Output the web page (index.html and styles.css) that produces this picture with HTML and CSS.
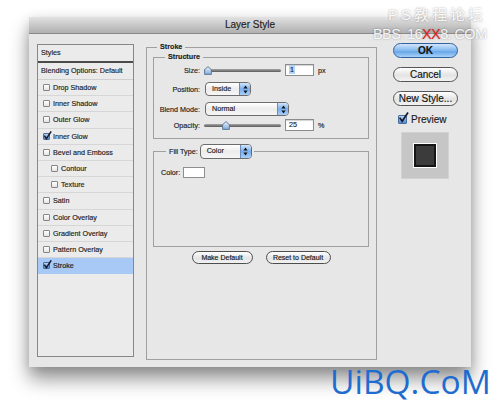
FILE: index.html
```html
<!DOCTYPE html>
<html>
<head>
<meta charset="utf-8">
<title>Layer Style</title>
<link rel="stylesheet" href="styles.css">
</head>
<body>
<div class="stage">
  <div class="dialog">
    <div class="titlebar">Layer Style</div>
    <div class="content">
      <div class="styles-list">
        <div class="list-head">Styles</div>
        <div class="list-blend">Blending Options: Default</div>
        <div class="list-row"><span class="cb"></span>Drop Shadow</div>
        <div class="list-row"><span class="cb"></span>Inner Shadow</div>
        <div class="list-row"><span class="cb"></span>Outer Glow</div>
        <div class="list-row"><span class="cb checked"><svg class="tick" viewBox="0 0 9 9" width="9" height="9"><path d="M1.3 4.6 L3.4 7.6 L8.2 0.4" fill="none" stroke="#15192a" stroke-width="1.5"/></svg></span>Inner Glow</div>
        <div class="list-row"><span class="cb"></span>Bevel and Emboss</div>
        <div class="list-row sub"><span class="cb"></span>Contour</div>
        <div class="list-row sub"><span class="cb"></span>Texture</div>
        <div class="list-row"><span class="cb"></span>Satin</div>
        <div class="list-row"><span class="cb"></span>Color Overlay</div>
        <div class="list-row"><span class="cb"></span>Gradient Overlay</div>
        <div class="list-row"><span class="cb"></span>Pattern Overlay</div>
        <div class="list-row selected"><span class="cb checked"><svg class="tick" viewBox="0 0 9 9" width="9" height="9"><path d="M1.3 4.6 L3.4 7.6 L8.2 0.4" fill="none" stroke="#15192a" stroke-width="1.5"/></svg></span>Stroke</div>
      </div>

      <div class="middle">
        <fieldset class="group stroke-group">
          <legend class="legend-stroke">Stroke</legend>
          <fieldset class="group structure">
            <legend class="legend-structure">Structure</legend>
            <div class="frow">
              <span class="flabel">Size:</span>
              <div class="slider"><div class="track"></div><svg class="thumb" style="left:0px" viewBox="0 0 8 9" width="8" height="9"><defs><linearGradient id="tg1" x1="0" y1="0" x2="0" y2="1"><stop offset="0" stop-color="#eef5fd"/><stop offset="1" stop-color="#7fa9dc"/></linearGradient></defs><path d="M4 0.6 L7.4 3.6 L7.4 8.4 L0.6 8.4 L0.6 3.6 Z" fill="url(#tg1)" stroke="#56708f" stroke-width="0.9"/></svg></div>
              <div class="num"><span class="hl">1</span></div>
              <span class="unit">px</span>
            </div>
            <div class="frow r-pos">
              <span class="flabel">Position:</span>
              <div class="popup w-pos"><span class="popup-text">Inside</span><span class="popup-arrows"><svg viewBox="0 0 5 9" width="5" height="9"><path d="M2.5 0.6 L4.6 3.6 L0.4 3.6 Z M0.4 5.4 L4.6 5.4 L2.5 8.4 Z" fill="#141414"/></svg></span></div>
            </div>
            <div class="frow r-blend">
              <span class="flabel">Blend Mode:</span>
              <div class="popup w-blend"><span class="popup-text">Normal</span><span class="popup-arrows"><svg viewBox="0 0 5 9" width="5" height="9"><path d="M2.5 0.6 L4.6 3.6 L0.4 3.6 Z M0.4 5.4 L4.6 5.4 L2.5 8.4 Z" fill="#141414"/></svg></span></div>
            </div>
            <div class="frow r-opac">
              <span class="flabel">Opacity:</span>
              <div class="slider"><div class="track"></div><svg class="thumb" style="left:18px" viewBox="0 0 8 9" width="8" height="9"><defs><linearGradient id="tg2" x1="0" y1="0" x2="0" y2="1"><stop offset="0" stop-color="#eef5fd"/><stop offset="1" stop-color="#7fa9dc"/></linearGradient></defs><path d="M4 0.6 L7.4 3.6 L7.4 8.4 L0.6 8.4 L0.6 3.6 Z" fill="url(#tg2)" stroke="#56708f" stroke-width="0.9"/></svg></div>
              <div class="num">25</div>
              <span class="unit">%</span>
            </div>
          </fieldset>

          <fieldset class="group fill">
            <legend class="legend-fill"><span class="fill-label">Fill Type:</span><span class="popup w-fill"><span class="popup-text">Color</span><span class="popup-arrows"><svg viewBox="0 0 5 9" width="5" height="9"><path d="M2.5 0.6 L4.6 3.6 L0.4 3.6 Z M0.4 5.4 L4.6 5.4 L2.5 8.4 Z" fill="#141414"/></svg></span></span></legend>
            <div class="color-row"><span>Color:</span><span class="swatch"></span></div>
          </fieldset>

          <div class="btn-row">
            <div class="pill w-make">Make Default</div>
            <div class="pill w-reset">Reset to Default</div>
          </div>
        </fieldset>
      </div>

      <div class="right-col">
        <div class="abtn ok">OK</div>
        <div class="abtn">Cancel</div>
        <div class="abtn">New Style...</div>
        <div class="preview-row"><span class="pcb"><svg class="ptick" viewBox="0 0 9 9" width="11" height="11"><path d="M1.3 4.6 L3.4 7.6 L8.2 0.4" fill="none" stroke="#15192a" stroke-width="1.4"/></svg></span><span>Preview</span></div>
        <div class="preview-box"><div class="preview-square"></div></div>
      </div>
    </div>
  </div>

  <div class="wm wm-top">PS教程论坛</div>
  <div class="wm wm-bbs">BBS. 16<span class="xx">XX</span>8. COM</div>
  <div class="logo">UiBQ.CoM</div>
</div>
</body>
</html>
```

FILE: styles.css
```css
* { box-sizing: border-box; }
html, body { margin: 0; padding: 0; background: #fff; }
body {
  width: 500px; height: 408px; overflow: hidden;
  font-family: "Liberation Sans", Arial, sans-serif;
  color: #1b1b1b;
}
.stage { position: relative; width: 500px; height: 408px; padding: 17px 0 0 29px; }

.dialog {
  width: 442px; height: 350px;
  background: #e7e7e7;
  box-shadow: 0 12px 18px rgba(0,0,0,.42), 0 2px 10px rgba(0,0,0,.12);
  display: flex; flex-direction: column;
}
.titlebar {
  flex: none; height: 17px;
  background: linear-gradient(#e2e2e2, #c6c6c6 55%, #b0b0b0);
  border-bottom: 1px solid #8a8a8a;
  font-size: 10px; line-height: 16px; text-align: center; color: #222;
  -webkit-text-stroke: 0.15px #222;
}
.content {
  flex: 1; display: flex; align-items: flex-start; font-size: 7.2px;
  -webkit-text-stroke: 0.15px #1b1b1b;
}

/* styles list */
.styles-list {
  flex: none; margin: 10px 0 0 8px; width: 97px; height: 313px;
  border: 1px solid #878787; background: #ebebeb;
}
.list-head { height: 18px; border-bottom: 2px solid #4b4b4b; padding-left: 3px; line-height: 16px; }
.list-blend { height: 17px; border-bottom: 1px solid #cfcfcf; padding-left: 3px; line-height: 16px; }
.list-row {
  height: 16.2px; border-bottom: 1px solid #d6d6d6;
  display: flex; align-items: center; padding-left: 5px;
}
.list-row.sub { padding-left: 13px; }
.list-row.selected { background: #a8c8f6; border-bottom-color: #a8c8f6; }
.cb {
  position: relative; flex: none; width: 7px; height: 7px; margin-right: 3px;
  border: 1px solid #858585; border-radius: 1px;
  background: linear-gradient(#ffffff, #e4e4e4);
}
.cb.checked { background: linear-gradient(#b9d4f5, #5d92d8); border-color: #4c6e9c; }
.tick { position: absolute; left: -1px; top: -3px; }

/* middle */
.middle { flex: none; margin: 8px 0 0 12px; width: 231px; height: 318px; }
.group { margin: 0; border: 1px solid #a0a0a0; min-width: 0; }
.group legend { padding: 0 3px; line-height: 10px; height: 10px; font-weight: bold; }
.stroke-group { height: 318px; padding: 0 7px 0 6px; }
.legend-stroke { margin-left: 4px; }
.structure { padding: 1px 0 6px 0; height: 87px; }
.legend-structure { margin-left: 11px; }

.frow { display: flex; align-items: center; height: 14px; }
.r-pos { margin-top: 5px; }
.r-blend { margin-top: 6px; }
.r-opac { margin-top: 2px; }
.flabel { width: 46px; text-align: right; margin-right: 4px; }

.slider { position: relative; width: 77px; height: 9px; }
.track {
  position: absolute; left: 0; right: 0; top: 3px; height: 3px; border-radius: 2px;
  background: linear-gradient(#a5a5a5, #5a5a5a);
}
.thumb { position: absolute; top: 0; }
.num {
  width: 29px; height: 12px; margin-left: 4px;
  border: 1px solid #8c8c8c; background: #fff;
  box-shadow: inset 0 1px 1px rgba(0,0,0,.18);
  padding-left: 3px; line-height: 10px;
}
.hl { background: #b3d2fa; padding: 0 1px; }
.unit { margin-left: 4px; }

.popup {
  display: flex; height: 14px;
  border: 1px solid #6c6c6c; border-radius: 4px; overflow: hidden;
  background: linear-gradient(#ffffff, #ececec 50%, #f6f6f6);
  font-weight: normal;
}
.w-pos { width: 46px; margin-left: 1px; }
.w-blend { width: 84px; margin-left: 1px; }
.w-fill { width: 52px; margin-left: 2px; height: 15px; }
.popup-text { flex: 1; padding-left: 6px; line-height: 12px; }
.popup-arrows {
  flex: none; width: 11px; display: flex; align-items: center; justify-content: center;
  border-left: 1px solid #6b8dbd;
  background: linear-gradient(#d3e5fa, #78aeec 50%, #a8cff7);
}

.fill { margin-top: 4.5px; height: 103.5px; padding: 8.5px 0 0 7px; }
.group .legend-fill {
  margin-left: 5px; padding: 0 2px 0 3px; height: 15px; line-height: 13px;
  display: flex; align-items: center; font-weight: normal;
}
.color-row { display: flex; align-items: center; height: 11px; }
.swatch { width: 22px; height: 11px; margin-left: 3px; border: 1px solid #8e8e8e; background: #fff; }

.btn-row { margin-top: 4px; display: flex; justify-content: center; gap: 13px; }
.pill {
  height: 13px; border: 1px solid #4e4e4e; border-radius: 7px;
  background: linear-gradient(#ffffff, #e4e4e4 55%, #f2f2f2);
  font-size: 7px; line-height: 11px; text-align: center; color: #111;
}
.w-make { width: 61px; }
.w-reset { width: 65px; }

/* right column */
.right-col { flex: none; margin: 9px 0 0 16px; width: 65px; display: flex; flex-direction: column; }
.abtn {
  height: 15px; margin-bottom: 9px;
  border: 1px solid #565656; border-radius: 8px;
  background: linear-gradient(#ffffff, #e3e3e3 55%, #f3f3f3);
  font-size: 10px; line-height: 13px; text-align: center; color: #111;
}
.abtn.ok {
  font-weight: bold; border-color: #32609c;
  background: linear-gradient(#d2e6fb, #82b8ee 50%, #6aa7e8 60%, #a6d3fb);
}
.preview-row { display: flex; align-items: center; height: 10px; margin-top: -1px; padding-left: 5px; font-size: 10px; }
.pcb {
  position: relative; flex: none; width: 9px; height: 9px; margin-right: 4px;
  border: 1px solid #4c6e9c; border-radius: 1px;
  background: linear-gradient(#b9d4f5, #4f88d6);
}
.ptick { position: absolute; left: -1px; top: -4px; }
.preview-box {
  margin: 8px 0 0 8px; width: 48px; height: 47px;
  background: #c6c6c6; border: 1px solid #d2d2d2;
  display: flex; align-items: center; justify-content: center;
}
.preview-square {
  width: 22px; height: 23px; background: #3b3b3b;
  border: 2px solid #151515; box-shadow: 0 0 0 1px #ffffff;
}

/* watermarks */
.wm {
  position: absolute; white-space: nowrap;
  font-family: "Liberation Sans", "Noto Sans CJK SC", sans-serif;
  color: rgba(255,255,255,.92);
  text-shadow: 0 0 2px rgba(0,0,0,.35);
}
.wm-top { left: 388px; top: 7px; font-size: 15px; line-height: 15px; letter-spacing: 3px; }
.wm-bbs { left: 373px; top: 26px; font-size: 14.5px; line-height: 16px; letter-spacing: -0.6px; }
.xx { color: #e3231b; }
.logo {
  position: absolute; left: 330px; top: 365px;
  font-family: "Open Sans", sans-serif; font-size: 33.5px; line-height: 33px;
  color: #1e6ccf;
}
```
